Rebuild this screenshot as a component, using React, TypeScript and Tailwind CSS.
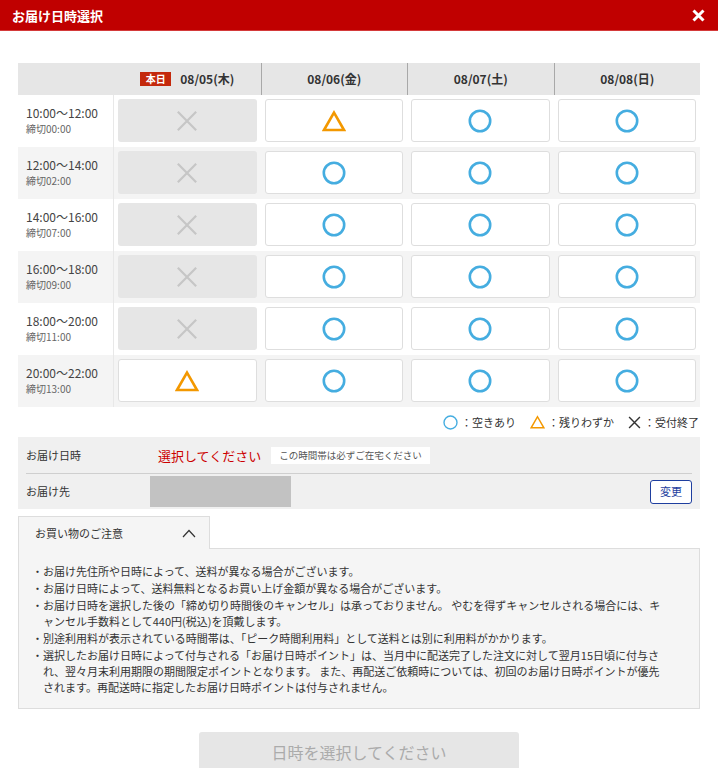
import React from "react";

type S = "o" | "t" | "x";

const rows: { t: string; d: string; s: S[] }[] = [
  { t: "10:00～12:00", d: "締切00:00", s: ["x", "t", "o", "o"] },
  { t: "12:00～14:00", d: "締切02:00", s: ["x", "o", "o", "o"] },
  { t: "14:00～16:00", d: "締切07:00", s: ["x", "o", "o", "o"] },
  { t: "16:00～18:00", d: "締切09:00", s: ["x", "o", "o", "o"] },
  { t: "18:00～20:00", d: "締切11:00", s: ["x", "o", "o", "o"] },
  { t: "20:00～22:00", d: "締切13:00", s: ["t", "o", "o", "o"] },
];

const Circle = ({ size = 24, w = 2.6 }: { size?: number; w?: number }) => (
  <svg width={size} height={size} viewBox="0 0 24 24">
    <circle cx="12" cy="12" r={12 - w / 2 - 0.5} fill="none" stroke="#45ade0" strokeWidth={w} />
  </svg>
);

const Tri = ({ w = 24, h = 22, sw = 2.6 }: { w?: number; h?: number; sw?: number }) => (
  <svg width={w} height={h} viewBox="0 0 24 22">
    <path d="M12 2.6 L22 20 H2 Z" fill="none" stroke="#f39800" strokeWidth={sw} strokeLinejoin="miter" />
  </svg>
);

const Cross = ({ size = 24, color = "#c6c6c6", sw = 2.4 }: { size?: number; color?: string; sw?: number }) => (
  <svg width={size} height={size} viewBox="0 0 24 24">
    <path d="M2 2 L22 22 M22 2 L2 22" stroke={color} strokeWidth={sw} fill="none" />
  </svg>
);

const font = { fontFamily: '"Noto Sans CJK JP", "Noto Sans", sans-serif' };

export default function App() {
  const dates = ["08/05(木)", "08/06(金)", "08/07(土)", "08/08(日)"];
  return (
    <div className="w-[718px] min-h-[768px] bg-white text-[#333]" style={font}>
      <div className="h-[31px] bg-[#c00000] border-b border-[#d43a3a] flex items-center justify-between pl-[12px] pr-[13px]">
        <span className="text-white text-[13px] font-bold leading-none">お届け日時選択</span>
        <svg width="13" height="13" viewBox="0 0 13 13">
          <path d="M1.5 1.5 L11.5 11.5 M11.5 1.5 L1.5 11.5" stroke="#fff" strokeWidth="3" />
        </svg>
      </div>

      <div className="px-[18px] pt-[32px]">
        {/* table */}
        <div className="w-[682px]">
          <div className="grid grid-cols-[96px_1fr_1fr_1fr_1fr] h-[32px] bg-[#e6e6e6]">
            <div />
            {dates.map((d, i) => (
              <div
                key={d}
                className={`flex items-center justify-center gap-[9px] text-[12px] font-bold text-[#333] ${i > 0 ? "border-l border-[#a8a8a8]" : ""}`}
              >
                {i === 0 && (
                  <span className="bg-[#c4290c] text-white text-[10px] font-bold leading-none w-[31px] h-[14px] flex items-center justify-center">
                    本日
                  </span>
                )}
                <span>{d}</span>
              </div>
            ))}
          </div>
          {rows.map((r, ri) => (
            <div
              key={r.t}
              className={`grid grid-cols-[96px_1fr_1fr_1fr_1fr] h-[52px] ${ri % 2 === 1 ? "bg-[#f4f4f4]" : "bg-white"}`}
            >
              <div className="border-r border-[#e8e8e8] pl-[8px] flex flex-col justify-center pb-[2px]">
                <div className="text-[12px] leading-[17px] text-[#444]">{r.t}</div>
                <div className="text-[10px] leading-[15px] text-[#666]">{r.d}</div>
              </div>
              {r.s.map((s, ci) => (
                <div key={ci} className="px-[4px] pt-[4px]">
                  {s === "x" ? (
                    <div className="h-[43px] rounded-[3px] bg-[#e6e6e6] flex items-center justify-center">
                      <Cross size={22} />
                    </div>
                  ) : (
                    <div className="h-[43px] rounded-[3px] bg-white border border-[#dedede] flex items-center justify-center">
                      {s === "o" ? <Circle size={24} /> : <Tri />}
                    </div>
                  )}
                </div>
              ))}
            </div>
          ))}
        </div>

        {/* legend */}
        <div className="h-[30px] flex items-center justify-end gap-[14px] text-[11px] text-[#333] pr-[1px]">
          <div className="flex items-center gap-[3px]">
            <Circle size={15} w={2.2} />
            <span>：空きあり</span>
          </div>
          <div className="flex items-center gap-[3px]">
            <Tri w={15} h={14} sw={2.4} />
            <span>：残りわずか</span>
          </div>
          <div className="flex items-center gap-[3px]">
            <Cross size={13} color="#333" sw={2.6} />
            <span>：受付終了</span>
          </div>
        </div>

        {/* info box */}
        <div className="bg-[#f0f0f0] w-[682px]">
          <div className="mx-[8px] h-[37px] flex items-center border-b border-[#cfcfcf]">
            <div className="w-[124px] text-[11px] text-[#333]">お届け日時</div>
            <div className="ml-[8px] text-[13px] text-[#cc0000] leading-none">選択してください</div>
            <div className="ml-[10px] bg-white text-[9.5px] text-[#555] px-[8px] h-[17px] flex items-center">
              この時間帯は必ずご在宅ください
            </div>
          </div>
          <div className="mx-[8px] h-[35px] flex items-center">
            <div className="w-[124px] text-[11px] text-[#333]">お届け先</div>
            <div className="w-[141px] h-[31px] bg-[#c2c2c2]" />
            <div className="flex-1" />
            <div className="w-[42px] h-[24px] border border-[#1f3f9f] rounded-[3px] bg-white text-[#1f3f9f] text-[11px] flex items-center justify-center">
              変更
            </div>
          </div>
        </div>

        {/* notice tab */}
        <div className="mt-[7px]">
          <div className="w-[192px] h-[33px] bg-[#f5f5f5] border border-b-0 border-[#dddddd] flex items-center justify-between pl-[16px] pr-[13px] relative z-10 -mb-[1px]">
            <span className="text-[11px] text-[#333]">お買い物のご注意</span>
            <svg width="14" height="9" viewBox="0 0 14 9">
              <path d="M1 8 L7 1.5 L13 8" fill="none" stroke="#333" strokeWidth="1.2" />
            </svg>
          </div>
          <div className="bg-[#f5f5f5] border border-[#dddddd] pl-[13px] pr-[4px] pt-[14px] pb-[13px] text-[11px] leading-[16px] text-[#333] flex flex-col gap-[1px]">
            <div className="flex">
              <span className="w-[11px] shrink-0">・</span>
              <span>お届け先住所や日時によって、送料が異なる場合がございます。</span>
            </div>
            <div className="flex">
              <span className="w-[11px] shrink-0">・</span>
              <span>お届け日時によって、送料無料となるお買い上げ金額が異なる場合がございます。</span>
            </div>
            <div className="flex">
              <span className="w-[11px] shrink-0">・</span>
              <span className="whitespace-nowrap">
                お届け日時を選択した後の「締め切り時間後のキャンセル」は承っておりません。 やむを得ずキャンセルされる場合には、キ
                <br />
                ャンセル手数料として440円(税込)を頂戴します。
              </span>
            </div>
            <div className="flex">
              <span className="w-[11px] shrink-0">・</span>
              <span>別途利用料が表示されている時間帯は、「ピーク時間利用料」として送料とは別に利用料がかかります。</span>
            </div>
            <div className="flex">
              <span className="w-[11px] shrink-0">・</span>
              <span className="whitespace-nowrap">
                選択したお届け日時によって付与される「お届け日時ポイント」は、当月中に配送完了した注文に対して翌月15日頃に付与さ
                <br />
                れ、翌々月末利用期限の期間限定ポイントとなります。 また、再配送ご依頼時については、初回のお届け日時ポイントが優先
                <br />
                されます。再配送時に指定したお届け日時ポイントは付与されません。
              </span>
            </div>
          </div>
        </div>

        {/* bottom button */}
        <div className="flex justify-center pt-[23px]">
          <div className="w-[320px] h-[40px] rounded-[3px] bg-[#e6e6e6] text-[#ababab] text-[16px] flex items-center justify-center">
            日時を選択してください
          </div>
        </div>
      </div>
    </div>
  );
}
